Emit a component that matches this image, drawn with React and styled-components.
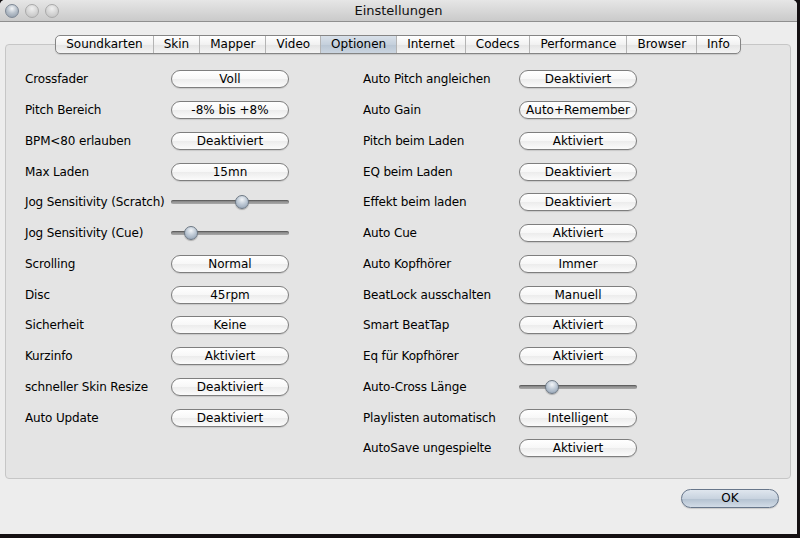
import React from "react";
import styled, { createGlobalStyle } from "styled-components";

const Global = createGlobalStyle`
  html, body { margin: 0; padding: 0; background: #141012; }
  body { font-family: "DejaVu Sans", "Liberation Sans", sans-serif; }
`;

const Screen = styled.div`
  width: 800px;
  height: 538px;
  background: #141012;
  overflow: hidden;
`;

const Window = styled.div`
  width: 797px;
  height: 534px;
  background: #ededed;
  border-radius: 5px 5px 0 0;
  display: flex;
  flex-direction: column;
  overflow: hidden;
`;

const TitleBar = styled.div`
  height: 21px;
  border-bottom: 1px solid #8f8f8f;
  background: linear-gradient(#e6e6e6, #cacaca);
  display: flex;
  align-items: center;
  position: relative;
  padding-left: 5px;
  gap: 5px;
`;

const Light = styled.div`
  width: 14px;
  height: 14px;
  border-radius: 50%;
  box-sizing: border-box;
  border: 1px solid ${(p) => (p.active ? "#7d8794" : "#a9a9a9")};
  background: ${(p) =>
    p.active
      ? "radial-gradient(circle at 50% 30%, #f4f6f8 0%, #b9c2cc 45%, #8a96a4 100%)"
      : "radial-gradient(circle at 50% 30%, #f0f0f0 0%, #d6d6d6 50%, #bdbdbd 100%)"};
  margin-left: ${(p) => p.offset || 0}px;
`;

const Title = styled.div`
  position: absolute;
  left: 0;
  right: 0;
  top: 0;
  bottom: 0;
  display: flex;
  align-items: center;
  justify-content: center;
  font-size: 13px;
  color: #111;
  pointer-events: none;
`;

const Content = styled.div`
  flex: 1;
  padding: 13px 6px 0 5px;
  display: flex;
  flex-direction: column;
`;

const TabStrip = styled.div`
  align-self: center;
  display: flex;
  height: 19px;
  box-sizing: border-box;
  border: 1px solid #858585;
  border-radius: 5px;
  overflow: hidden;
  margin-bottom: -10px;
  position: relative;
  z-index: 1;
  background: linear-gradient(#ffffff, #f1f1f1 50%, #e4e4e4 51%, #f4f4f4);
  box-shadow: 0 1px 1px rgba(0, 0, 0, 0.12);
`;

const Tab = styled.div`
  padding: 0 ${(p) => p.pad}px;
  font-size: 12px;
  line-height: 17px;
  color: #000;
  border-left: ${(p) => (p.first ? "none" : "1px solid #b4b4b4")};
  background: ${(p) =>
    p.selected
      ? "linear-gradient(#d9e1ea, #c5d0dc 50%, #b8c5d3 51%, #cbd5e0)"
      : "transparent"};
`;

const Box = styled.div`
  height: 435px;
  box-sizing: border-box;
  border: 1px solid #c6c6c6;
  border-radius: 4px;
  background: #e4e4e4;
  padding: 19px 0 0 19px;
  display: flex;
  gap: 74px;
`;

const Column = styled.div`
  display: grid;
  grid-template-columns: ${(p) => p.label}px 118px;
  grid-auto-rows: 30.75px;
  align-items: center;
`;

const Label = styled.div`
  font-size: 12px;
  letter-spacing: -0.15px;
  color: #000;
  white-space: nowrap;
`;

const PopButton = styled.div`
  height: 18px;
  box-sizing: border-box;
  border: 1px solid #7e7e7e;
  border-radius: 9px;
  background: linear-gradient(#ffffff, #f7f7f7 50%, #ececec 51%, #fbfbfb);
  box-shadow: 0 1px 1px rgba(0, 0, 0, 0.12);
  font-size: 12px;
  line-height: 16px;
  text-align: center;
  color: #000;
  white-space: nowrap;
  overflow: hidden;
`;

const SliderTrack = styled.div`
  position: relative;
  height: 14px;
  display: flex;
  align-items: center;
  &::before {
    content: "";
    flex: 1;
    height: 4px;
    border-radius: 2px;
    background: linear-gradient(#7f7f7f, #a9a9a9);
    box-shadow: inset 0 1px 1px rgba(0, 0, 0, 0.3);
  }
`;

const Knob = styled.div`
  position: absolute;
  top: 0;
  width: 14px;
  height: 14px;
  box-sizing: border-box;
  border-radius: 50%;
  border: 1px solid #6d7884;
  background: radial-gradient(circle at 50% 30%, #f2f5f8 0%, #bfcad6 45%, #8a9aad 100%);
  box-shadow: 0 1px 1px rgba(0, 0, 0, 0.25);
`;

const Footer = styled.div`
  display: flex;
  justify-content: flex-end;
  padding: 10px 12px 0 0;
`;

const OkButton = styled.div`
  width: 98px;
  height: 19px;
  box-sizing: border-box;
  border: 1px solid #67768a;
  border-radius: 10px;
  background: linear-gradient(#dfe6ee, #c8d3df 50%, #b3c1d0 51%, #d2dce7);
  box-shadow: 0 1px 1px rgba(0, 0, 0, 0.15);
  font-size: 12px;
  line-height: 17px;
  text-align: center;
  color: #000;
`;

const Slider = ({ value }) => (
  <SliderTrack>
    <Knob style={{ left: `${value * 104}px` }} />
  </SliderTrack>
);

const tabs = [
  "Soundkarten",
  "Skin",
  "Mapper",
  "Video",
  "Optionen",
  "Internet",
  "Codecs",
  "Performance",
  "Browser",
  "Info",
];

const left = [
  ["Crossfader", "Voll"],
  ["Pitch Bereich", "-8% bis +8%"],
  ["BPM<80 erlauben", "Deaktiviert"],
  ["Max Laden", "15mn"],
  ["Jog Sensitivity (Scratch)", 0.615],
  ["Jog Sensitivity (Cue)", 0.125],
  ["Scrolling", "Normal"],
  ["Disc", "45rpm"],
  ["Sicherheit", "Keine"],
  ["Kurzinfo", "Aktiviert"],
  ["schneller Skin Resize", "Deaktiviert"],
  ["Auto Update", "Deaktiviert"],
];

const right = [
  ["Auto Pitch angleichen", "Deaktiviert"],
  ["Auto Gain", "Auto+Remember"],
  ["Pitch beim Laden", "Aktiviert"],
  ["EQ beim Laden", "Deaktiviert"],
  ["Effekt beim laden", "Deaktiviert"],
  ["Auto Cue", "Aktiviert"],
  ["Auto Kopfhörer", "Immer"],
  ["BeatLock ausschalten", "Manuell"],
  ["Smart BeatTap", "Aktiviert"],
  ["Eq für Kopfhörer", "Aktiviert"],
  ["Auto-Cross Länge", 0.25],
  ["Playlisten automatisch", "Intelligent"],
  ["AutoSave ungespielte", "Aktiviert"],
];

const renderRows = (rows) =>
  rows.map(([label, v]) => (
    <React.Fragment key={label}>
      <Label>{label}</Label>
      {typeof v === "number" ? <Slider value={v} /> : <PopButton>{v}</PopButton>}
    </React.Fragment>
  ));

export default function App() {
  return (
    <Screen>
      <Global />
      <Window>
        <TitleBar>
          <Light active />
          <Light offset={1} />
          <Light offset={1} />
          <Title>Einstellungen</Title>
        </TitleBar>
        <Content>
          <TabStrip>
            {tabs.map((t, i) => (
              <Tab key={t} first={i === 0} selected={t === "Optionen"} pad={10}>
                {t}
              </Tab>
            ))}
          </TabStrip>
          <Box>
            <Column label={146}>{renderRows(left)}</Column>
            <Column label={156}>{renderRows(right)}</Column>
          </Box>
          <Footer>
            <OkButton>OK</OkButton>
          </Footer>
        </Content>
      </Window>
    </Screen>
  );
}
